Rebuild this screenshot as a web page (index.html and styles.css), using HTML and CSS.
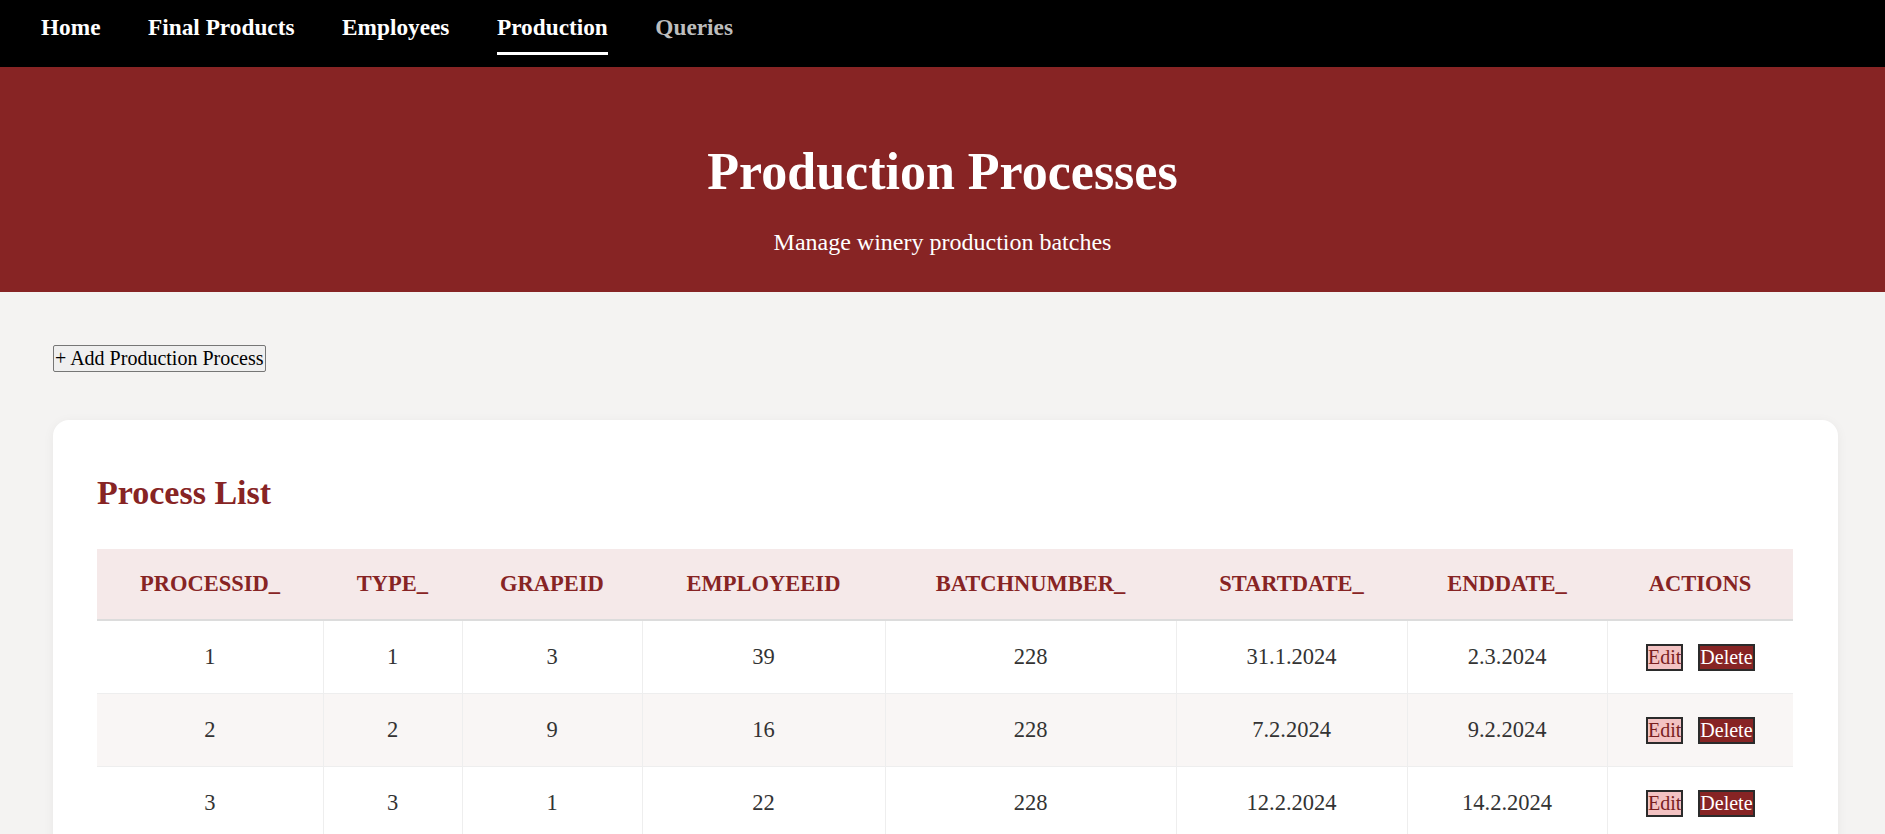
FILE: index.html
```html
<!DOCTYPE html>
<html lang="en">
<head>
<meta charset="utf-8">
<title>Production Processes</title>
<link rel="stylesheet" href="styles.css">
</head>
<body>
<nav class="topnav">
  <a class="nav-link" href="#">Home</a>
  <a class="nav-link" href="#">Final Products</a>
  <a class="nav-link" href="#">Employees</a>
  <a class="nav-link active" href="#">Production</a>
  <a class="nav-link muted" href="#">Queries</a>
</nav>
<header class="hero">
  <h1 class="hero-title">Production Processes</h1>
  <p class="hero-sub">Manage winery production batches</p>
</header>
<main class="content">
  <button class="add-btn">+ Add Production Process</button>
  <section class="card">
    <h2 class="card-title">Process List</h2>
    <table class="data-table">
      <thead>
        <tr>
          <th>PROCESSID_</th>
          <th>TYPE_</th>
          <th>GRAPEID</th>
          <th>EMPLOYEEID</th>
          <th>BATCHNUMBER_</th>
          <th>STARTDATE_</th>
          <th>ENDDATE_</th>
          <th>ACTIONS</th>
        </tr>
      </thead>
      <tbody>
        <tr>
          <td>1</td><td>1</td><td>3</td><td>39</td><td>228</td><td>31.1.2024</td><td>2.3.2024</td>
          <td><div class="actions"><button class="btn-edit">Edit</button><button class="btn-delete">Delete</button></div></td>
        </tr>
        <tr>
          <td>2</td><td>2</td><td>9</td><td>16</td><td>228</td><td>7.2.2024</td><td>9.2.2024</td>
          <td><div class="actions"><button class="btn-edit">Edit</button><button class="btn-delete">Delete</button></div></td>
        </tr>
        <tr>
          <td>3</td><td>3</td><td>1</td><td>22</td><td>228</td><td>12.2.2024</td><td>14.2.2024</td>
          <td><div class="actions"><button class="btn-edit">Edit</button><button class="btn-delete">Delete</button></div></td>
        </tr>
      </tbody>
    </table>
  </section>
</main>
</body>
</html>
```
FILE: styles.css
```css
* { box-sizing: border-box; }

body {
  margin: 0;
  font-family: "Liberation Serif", "Times New Roman", serif;
  background: #f4f3f2;
  color: #333;
}

.topnav {
  background: #000;
  display: flex;
  gap: 47.5px;
  padding: 14px 41px 12px;
}

.nav-link {
  color: #fff;
  text-decoration: none;
  font-weight: bold;
  font-size: 23.3px;
  padding-bottom: 11px;
  border-bottom: 3px solid transparent;
}

.nav-link.active { border-bottom-color: #fff; }
.nav-link.muted { color: #bdbdbd; }

.hero {
  background: #872424;
  color: #fff;
  text-align: center;
  padding: 75px 20px 36px;
}

.hero-title {
  margin: 0 0 28px;
  font-size: 52px;
  font-weight: bold;
}

.hero-sub {
  margin: 0;
  font-size: 24px;
}

.content {
  padding: 53px 47px 53px 53px;
}

.add-btn {
  display: block;
  font-family: inherit;
  font-size: 20px;
  color: #000;
  background: #efefef;
  border: 1px solid #767676;
  border-radius: 2px;
  padding: 1px 1px;
  margin-bottom: 48px;
}

.card {
  background: #fff;
  border-radius: 16px;
  padding: 44px 45px 44px 44px;
  box-shadow: 0 2px 12px rgba(0, 0, 0, 0.05);
}

.card-title {
  margin: 10px 0 37px;
  font-size: 34px;
  color: #872424;
}

.data-table {
  width: 100%;
  border-collapse: collapse;
  table-layout: fixed;
  font-size: 22.5px;
}

.data-table th {
  background: #f5e9e9;
  color: #872424;
  font-weight: bold;
  padding: 22px 8px;
  border-bottom: 2px solid #dcdcdc;
  text-align: center;
}

.data-table th:nth-child(1) { width: 226px; }
.data-table th:nth-child(2) { width: 139px; }
.data-table th:nth-child(3) { width: 180px; }
.data-table th:nth-child(4) { width: 243px; }
.data-table th:nth-child(5) { width: 291px; }
.data-table th:nth-child(6) { width: 231px; }
.data-table th:nth-child(7) { width: 200px; }
.data-table th:nth-child(8) { width: 186px; }

.data-table td {
  text-align: center;
  padding: 22.5px 8px;
  border: 1px solid #eeeeee;
  color: #333;
}

.data-table tr:first-child td { border-top: none; }
.data-table td:first-child { border-left: none; }
.data-table td:last-child { border-right: none; }

.data-table tbody tr:nth-child(even) td { background: #f9f6f5; }

.actions {
  display: flex;
  justify-content: center;
  gap: 15px;
}

.btn-edit,
.btn-delete {
  font-family: inherit;
  font-size: 20px;
  padding: 0;
  border: 2px solid #2b2b2b;
  border-radius: 0;
  line-height: 23px;
}

.btn-edit {
  background: #f3c3c3;
  color: #7a1f1f;
}

.btn-delete {
  background: #872424;
  color: #fff;
}
```
